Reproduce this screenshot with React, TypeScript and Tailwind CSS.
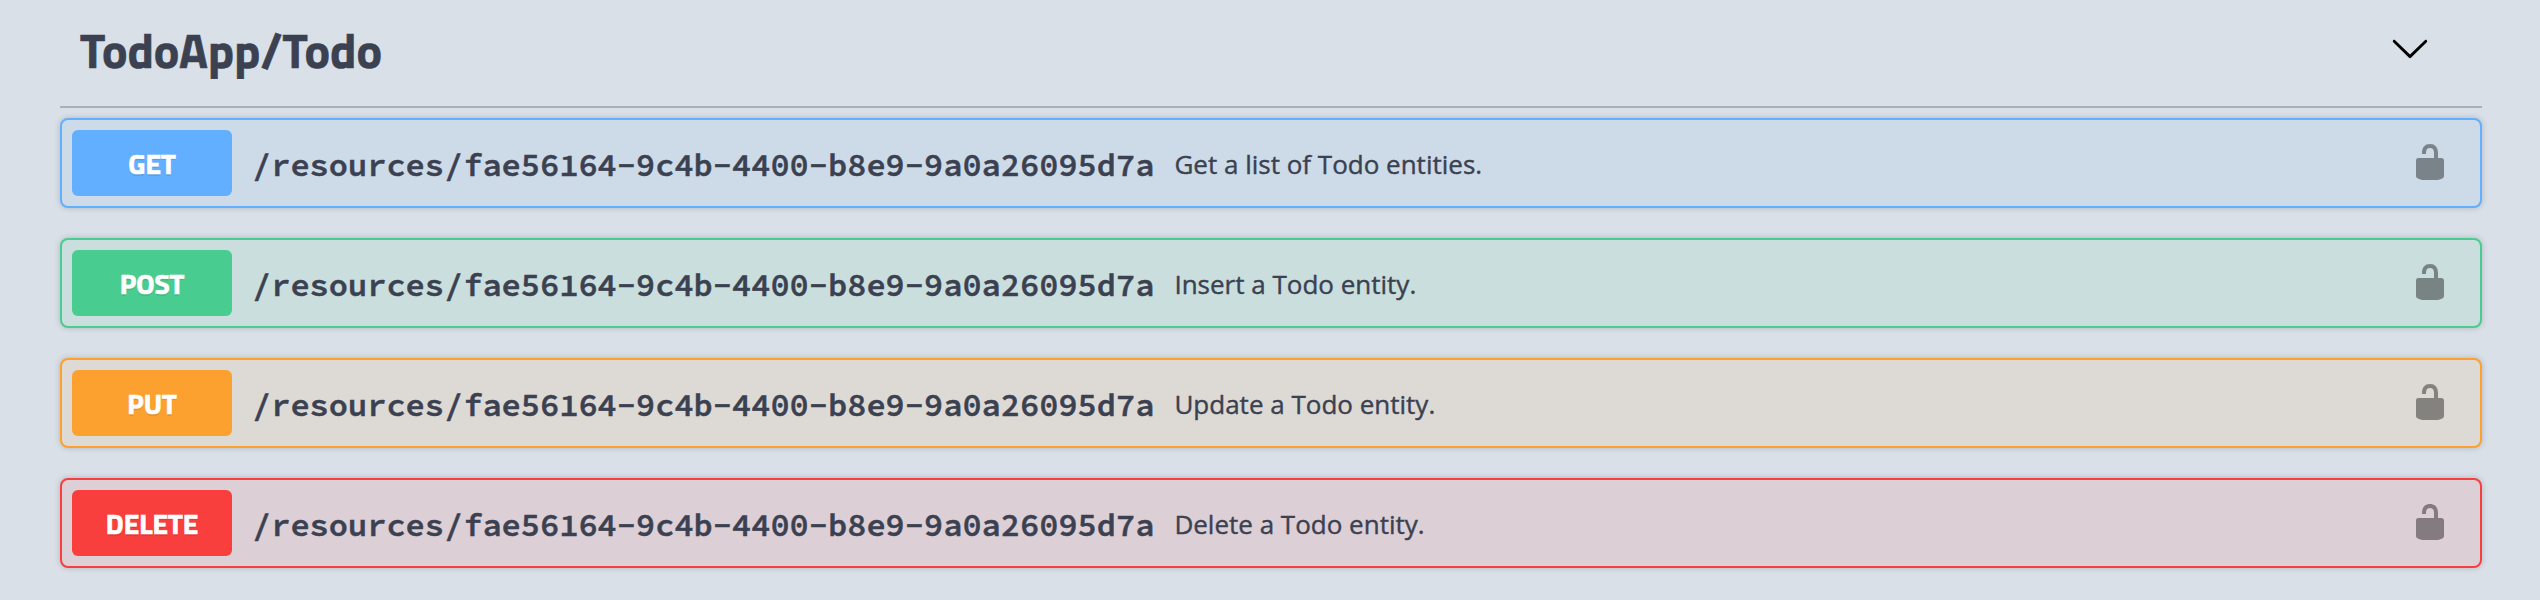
import React from 'react';

type Endpoint = {
  method: string;
  summary: string;
  block: string;
  badge: string;
};

const PATH = '/resources/fae56164-9c4b-4400-b8e9-9a0a26095d7a';

const endpoints: Endpoint[] = [
  { method: 'GET', summary: 'Get a list of Todo entities.', block: 'border-[#61affe] bg-[#cddbe8]', badge: 'bg-[#61affe]' },
  { method: 'POST', summary: 'Insert a Todo entity.', block: 'border-[#49cc90] bg-[#cadedd]', badge: 'bg-[#49cc90]' },
  { method: 'PUT', summary: 'Update a Todo entity.', block: 'border-[#fca130] bg-[#dddad5]', badge: 'bg-[#fca130]' },
  { method: 'DELETE', summary: 'Delete a Todo entity.', block: 'border-[#f93e3e] bg-[#dccfd6]', badge: 'bg-[#f93e3e]' },
];

function ChevronIcon() {
  return (
    <svg viewBox="0 0 20 20" className="size-10 text-black" fill="currentColor" aria-hidden="true">
      <path d="M17.418 6.109c.272-.268.709-.268.979 0s.271.701 0 .969l-7.908 7.83c-.27.268-.707.268-.979 0l-7.908-7.83c-.27-.268-.27-.701 0-.969s.709-.268.979 0L10 13.25l7.418-7.141z" />
    </svg>
  );
}

function UnlockedIcon() {
  return (
    <svg viewBox="0 0 20 20" className="size-10 text-black opacity-40" fill="currentColor" aria-hidden="true">
      <path d="M15.8 8H14V5.6C14 2.703 12.665 1 10 1 7.334 1 6 2.703 6 5.6V6h2v-.801C8 3.754 8.797 3 10 3c1.203 0 2 .754 2 2.199V8H4c-.553 0-1 .646-1 1.199V17c0 .549.428 1.139.951 1.307l1.197.387C5.672 18.861 6.55 19 7.1 19h5.8c.549 0 1.428-.139 1.951-.307l1.196-.387c.524-.167.953-.757.953-1.306V9.199C17 8.646 16.352 8 15.8 8z" />
    </svg>
  );
}

function EndpointRow({ method, summary, block, badge }: Endpoint) {
  return (
    <div className={`flex h-[90px] items-center rounded-lg border-2 px-2.5 shadow-[0_0_6px_rgba(0,0,0,0.19)] ${block}`}>
      <div className={`flex h-[66px] w-40 shrink-0 items-center justify-center rounded-md pt-0.5 font-['Titillium_Web','Open_Sans',sans-serif] text-[28px] leading-10 font-bold text-white [-webkit-text-stroke:0.7px] [text-shadow:0_2px_0_rgba(0,0,0,0.1)] ${badge}`}>
        {method}
      </div>
      <div className="ml-5 pt-1 font-['Source_Code_Pro','Liberation_Mono',monospace] text-[32px] leading-10 font-semibold [-webkit-text-stroke:0.5px]">{PATH}</div>
      <div className="ml-5 flex-1 pt-0.5 font-['Open_Sans',sans-serif] text-[26px] leading-9 [-webkit-text-stroke:0.4px]">{summary}</div>
      <div className="mr-5 pb-0.5">
        <UnlockedIcon />
      </div>
    </div>
  );
}

export default function App() {
  return (
    <div className="h-[600px] w-[2540px] bg-[#d9e0e8] pr-[58px] pl-[60px] text-[#3b4151]">
      <header className="flex h-[108px] items-center justify-between border-b-2 border-[#3b4151]/30 pr-[52px] pb-2.5 pl-5">
        <h2 className="pt-1.5 font-['Titillium_Web','Open_Sans',sans-serif] text-[48px] leading-[72px] font-bold [-webkit-text-stroke:0.6px]">TodoApp/Todo</h2>
        <ChevronIcon />
      </header>
      <main className="flex flex-col gap-[30px] pt-2.5">
        {endpoints.map((endpoint) => (
          <EndpointRow key={endpoint.method} {...endpoint} />
        ))}
      </main>
    </div>
  );
}
